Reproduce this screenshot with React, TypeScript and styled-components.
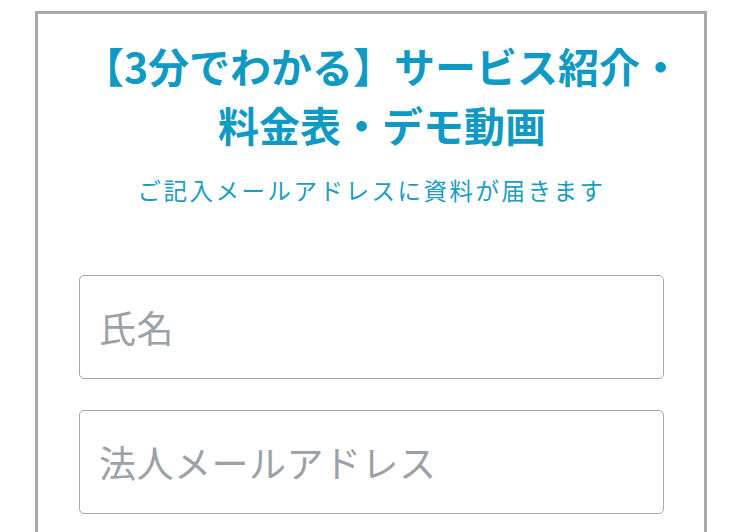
import styled, { createGlobalStyle } from "styled-components";

const GlobalStyle = createGlobalStyle`
  html, body {
    margin: 0;
    padding: 0;
    background: #ffffff;
  }
  body {
    font-family: "Noto Sans CJK JP", "Noto Sans", sans-serif;
  }
`;

const Card = styled.section`
  box-sizing: border-box;
  width: 672px;
  margin: 11px 0 0 35px;
  border: 3px solid #a6abb0;
  padding: 22px 40px 40px 41px;
  background: #ffffff;
`;

const Title = styled.h2`
  margin: 0 -21px 0 0;
  font-size: 41px;
  line-height: 59px;
  font-weight: 700;
  color: #0f9ac4;
  text-align: center;
  white-space: nowrap;
`;

const Lead = styled.p`
  margin: 18px 0 0;
  font-size: 23.5px;
  line-height: 36px;
  letter-spacing: 2.5px;
  color: #1b9cc5;
  text-align: center;
`;

const Form = styled.form`
  display: flex;
  flex-direction: column;
  gap: 31px;
  margin-top: 67px;
`;

const Field = styled.input`
  box-sizing: border-box;
  width: 100%;
  height: 104px;
  padding: 0 19px;
  border: 1px solid #a3a8ad;
  border-radius: 5px;
  background: #ffffff;
  font-family: "Noto Sans CJK JP", "Noto Sans", sans-serif;
  font-size: 37px;
  letter-spacing: 0.5px;
  color: #333;
  outline: none;

  &::placeholder {
    color: #9ba1a7;
    letter-spacing: 0.5px;
  }
`;

export default function App() {
  return (
    <>
      <GlobalStyle />
      <Card>
        <Title>
          【3分でわかる】サービス紹介・
          <br />
          料金表・デモ動画
        </Title>
        <Lead>ご記入メールアドレスに資料が届きます</Lead>
        <Form onSubmit={(e) => e.preventDefault()}>
          <Field type="text" placeholder="氏名" />
          <Field type="email" placeholder="法人メールアドレス" />
        </Form>
      </Card>
    </>
  );
}
